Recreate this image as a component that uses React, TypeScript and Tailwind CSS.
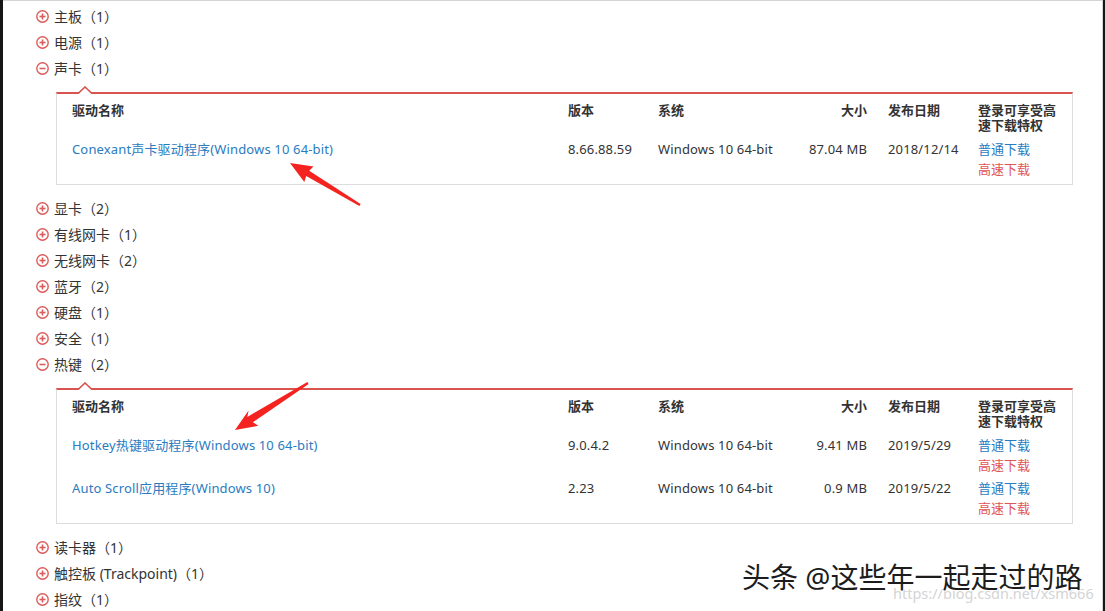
import React from 'react';

type Driver = {
  name: string;
  version: string;
  system: string;
  size: string;
  date: string;
};

type Category = {
  label: string;
  count: number;
  open?: boolean;
  drivers?: Driver[];
};

const categories: Category[] = [
  { label: '主板', count: 1 },
  { label: '电源', count: 1 },
  {
    label: '声卡',
    count: 1,
    open: true,
    drivers: [
      {
        name: 'Conexant声卡驱动程序(Windows 10 64-bit)',
        version: '8.66.88.59',
        system: 'Windows 10 64-bit',
        size: '87.04 MB',
        date: '2018/12/14',
      },
    ],
  },
  { label: '显卡', count: 2 },
  { label: '有线网卡', count: 1 },
  { label: '无线网卡', count: 2 },
  { label: '蓝牙', count: 2 },
  { label: '硬盘', count: 1 },
  { label: '安全', count: 1 },
  {
    label: '热键',
    count: 2,
    open: true,
    drivers: [
      {
        name: 'Hotkey热键驱动程序(Windows 10 64-bit)',
        version: '9.0.4.2',
        system: 'Windows 10 64-bit',
        size: '9.41 MB',
        date: '2019/5/29',
      },
      {
        name: 'Auto Scroll应用程序(Windows 10)',
        version: '2.23',
        system: 'Windows 10 64-bit',
        size: '0.9 MB',
        date: '2019/5/22',
      },
    ],
  },
  { label: '读卡器', count: 1 },
  { label: '触控板 (Trackpoint)', count: 1 },
  { label: '指纹', count: 1 },
];

const COLS = 'grid grid-cols-[496px_90px_130px_100px_90px_1fr]';

function ToggleIcon({ open }: { open?: boolean }) {
  return (
    <svg width="13" height="13" viewBox="0 0 13 13" className="shrink-0">
      <circle cx="6.5" cy="6.5" r="5.7" fill="none" stroke="#dc5a5a" strokeWidth="1.4" />
      <line x1="3.5" y1="6.5" x2="9.5" y2="6.5" stroke="#dc5a5a" strokeWidth="1.6" />
      {!open && <line x1="6.5" y1="3.5" x2="6.5" y2="9.5" stroke="#dc5a5a" strokeWidth="1.6" />}
    </svg>
  );
}

function DriverTable({ drivers }: { drivers: Driver[] }) {
  return (
    <div className="relative mt-[11px] mb-[10px] ml-[53px] w-[1017px] border-t-2 border-t-[#d9534f] border-x border-b border-[#dcdcdc] pl-[15px] pb-[5px] text-[13px] text-[#333]">
      {/* caret pointing at the open category */}
      <svg width="14" height="8" viewBox="0 0 14 8" className="absolute -top-[8px] left-[21px]">
        <polyline points="0,7.5 7,1 14,7.5" fill="#fff" stroke="#d9534f" strokeWidth="1.6" />
        <rect x="1.5" y="7" width="11" height="1" fill="#fff" />
      </svg>

      <div className={`${COLS} pt-[9px] leading-[15px] font-semibold`}>
        <div>驱动名称</div>
        <div>版本</div>
        <div>系统</div>
        <div className="pr-[21px] text-right">大小</div>
        <div>发布日期</div>
        <div className="pr-3">登录可享受高速下载特权</div>
      </div>

      <div className="mt-[6px] flex flex-col gap-[3px]">
        {drivers.map((d) => (
          <div key={d.name} className={`${COLS} leading-[20px] tracking-[0.15px]`}>
            <div className="text-[#2a7bbf]">{d.name}</div>
            <div>{d.version}</div>
            <div>{d.system}</div>
            <div className="pr-[21px] text-right">{d.size}</div>
            <div>{d.date}</div>
            <div className="flex flex-col tracking-normal">
              <span className="text-[#2a7bbf]">普通下载</span>
              <span className="text-[#e05555]">高速下载</span>
            </div>
          </div>
        ))}
      </div>
    </div>
  );
}

export default function App() {
  return (
    <div
      className="relative h-[611px] w-[1105px] overflow-hidden border-l-[3px] border-r-[2px] border-l-[#161616] border-r-[#161616] bg-white"
      style={{ fontFamily: '"Noto Sans", "Noto Sans CJK SC", sans-serif' }}
    >
      <div className="h-full border-t border-r border-[#d4d4d4] pt-[2px]">
        {categories.map((c) => (
          <div key={c.label}>
            <div className="ml-[33px] flex h-[26px] items-center gap-[5px] text-[14px] text-[#333]">
              <ToggleIcon open={c.open} />
              <span>
                {c.label}（{c.count}）
              </span>
            </div>
            {c.open && c.drivers && <DriverTable drivers={c.drivers} />}
          </div>
        ))}
      </div>

      {/* annotation arrows */}
      <svg className="pointer-events-none absolute left-[-3px] top-0" width="1105" height="611">
        <polygon
          points="290,163 313.5,166.6 309.2,170.8 360.6,204 359.4,206 306.2,176 304.3,182"
          fill="#f5231f"
        />
        <polygon
          points="235,430 258.4,425.7 252.9,422.2 308.6,384 307.4,382 247.3,416.9 248.6,410.5"
          fill="#f5231f"
        />
      </svg>

      {/* watermarks */}
      <div className="pointer-events-none absolute left-[890px] top-[584px] text-[14.5px] leading-[18px] text-[#d4d4d4]">
        https://blog.csdn.net/xsm666
      </div>
      <div className="pointer-events-none absolute left-[739px] top-[559px] text-[28px] leading-[36px] text-[#1c1c1c] [text-shadow:1px_1px_0_#fff,-1px_-1px_0_#fff,1px_-1px_0_#fff,-1px_1px_0_#fff]">
        头条 @这些年一起走过的路
      </div>
    </div>
  );
}
